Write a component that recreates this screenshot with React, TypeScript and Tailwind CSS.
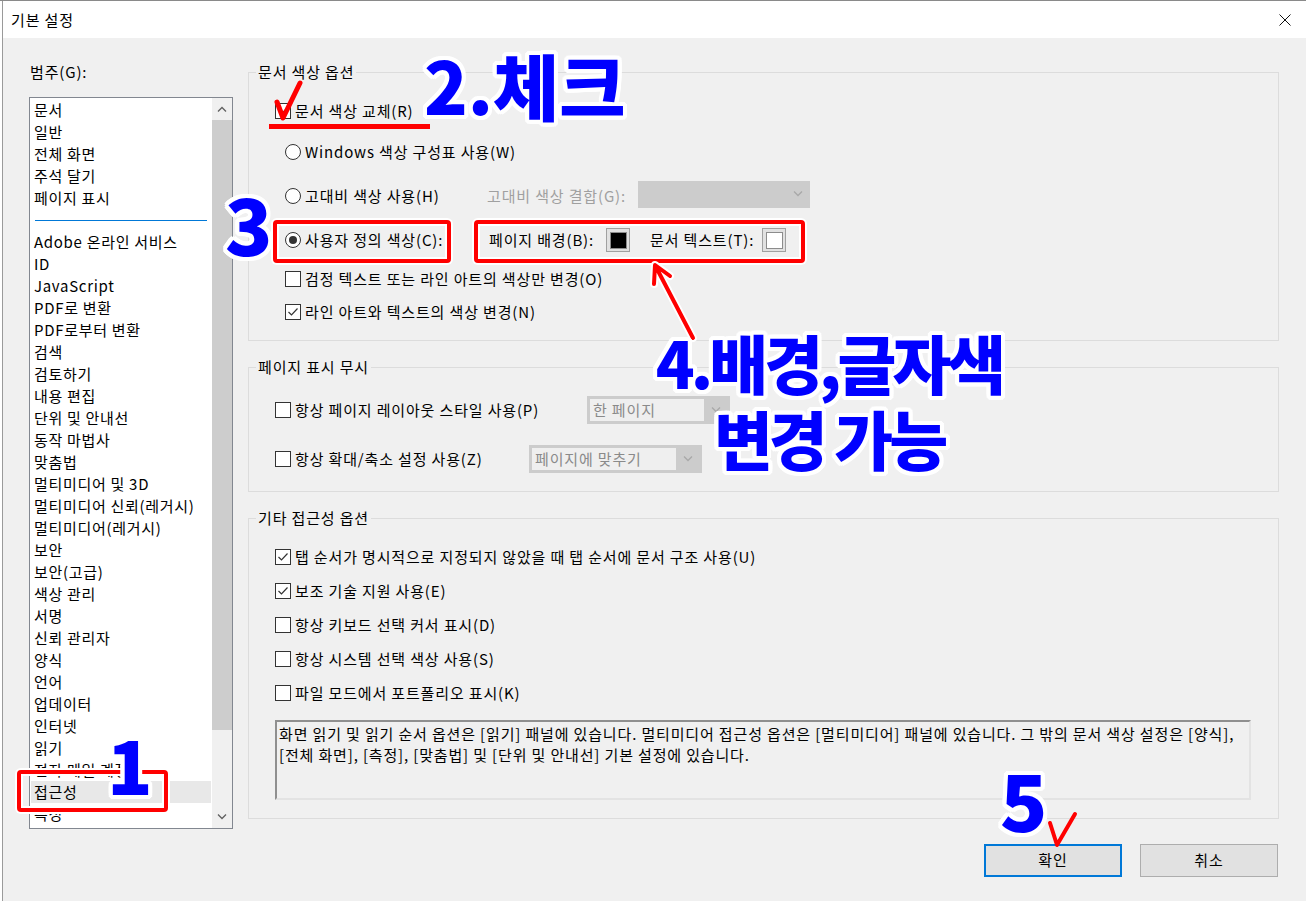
import React from "react";

const top = ["문서", "일반", "전체 화면", "주석 달기", "페이지 표시"];
const rest = [
    "Adobe 온라인 서비스", "ID", "JavaScript", "PDF로 변환", "PDF로부터 변환", "검색", "검토하기",
    "내용 편집", "단위 및 안내선", "동작 마법사", "맞춤법", "멀티미디어 및 3D", "멀티미디어 신뢰(레거시)",
    "멀티미디어(레거시)", "보안", "보안(고급)", "색상 관리", "서명", "신뢰 관리자", "양식", "언어",
    "업데이터", "인터넷", "읽기", "전자 메일 계정", "접근성", "측정",
];

// white outline round the blue annotation numbers
const big =
    "absolute font-black text-[#0000ff] whitespace-nowrap [text-shadow:4px_0_#fff,-4px_0_#fff,0_4px_#fff,0_-4px_#fff,3px_3px_#fff,-3px_-3px_#fff,3px_-3px_#fff,-3px_3px_#fff,2px_4px_#fff,-2px_4px_#fff,4px_2px_#fff,-4px_2px_#fff,2px_-4px_#fff,-2px_-4px_#fff,4px_-2px_#fff,-4px_-2px_#fff]";

function Chevron({ up = false, color = "#606060" }: { up?: boolean; color?: string }) {
    return (
        <svg width="10" height="6" viewBox="0 0 10 6">
            <path d={up ? "M1 5.5 L5 1.5 L9 5.5" : "M1 0.5 L5 4.5 L9 0.5"} fill="none" stroke={color} strokeWidth="1.3" />
        </svg>
    );
}

function Check({ on = false }: { on?: boolean }) {
    return (
        <span className="w-[16px] h-[16px] border border-[#333] bg-white flex items-center justify-center shrink-0">
            {on && (
                <svg width="12" height="12" viewBox="0 0 12 12">
                    <path d="M1.5 6 L4.5 9 L10.5 2.5" fill="none" stroke="#333" strokeWidth="1.2" />
                </svg>
            )}
        </span>
    );
}

function Radio({ on = false }: { on?: boolean }) {
    return (
        <span className="w-[16px] h-[16px] rounded-full border border-[#333] bg-white flex items-center justify-center shrink-0">
            {on && <span className="w-[8px] h-[8px] rounded-full bg-[#333]" />}
        </span>
    );
}

function Swatch({ color }: { color: string }) {
    return (
        <span className="w-[24px] h-[24px] border border-[#a0a0a0] bg-[#e1e1e1] flex items-center justify-center shrink-0">
            <span className={`w-[17px] h-[17px] border border-[#8c8c8c] ${color}`} />
        </span>
    );
}

function Combo({ w, text }: { w: string; text: string }) {
    return (
        <div className={`${w} h-[28px] bg-[#cccccc] p-[3px] flex`}>
            <div className="flex-1 bg-[#efefef] text-[#8a8a8a] px-[3px] leading-[22px] whitespace-nowrap overflow-hidden">{text}</div>
            <div className="w-[23px] flex items-center justify-center">
                <Chevron color="#a8a8a8" />
            </div>
        </div>
    );
}

export default function App() {
    return (
        <div className="w-[1306px] h-[901px] bg-white relative overflow-hidden flex border-t border-[#8a8a8a] font-['Noto_Sans_CJK_KR','Noto_Sans',sans-serif] text-[15px] text-black">
            <div className="w-[2px] shrink-0 bg-white" />
            <div className="flex-1 flex flex-col border-l border-[#9a9a9a] tracking-[0.85px]">
                {/* title bar */}
                <div className="h-[37px] bg-white flex items-center justify-between pl-[8px] pr-[15px]">
                    <span className="leading-[22px]">기본 설정</span>
                    <svg width="12" height="12" viewBox="0 0 12 12">
                        <path d="M0.5 0.5 L11.5 11.5 M11.5 0.5 L0.5 11.5" stroke="#111" strokeWidth="1" />
                    </svg>
                </div>

                <div className="flex-1 bg-[#f0f0f0] flex pl-[26px] pt-[23px]">
                    {/* category list */}
                    <div className="w-[204px] shrink-0 flex flex-col">
                        <div className="h-[22px] leading-[22px] pl-[1px]">범주(G):</div>
                        <div className="mt-[14px] h-[732px] border border-[#828790] bg-white flex">
                            <div className="flex-1 overflow-hidden pt-[1px] tracking-[0.7px]">
                                {top.map((t) => (
                                    <div key={t} className="h-[22px] leading-[22px] pl-[4px] whitespace-nowrap">{t}</div>
                                ))}
                                <div className="h-[22px] flex items-center px-[5px]">
                                    <div className="h-px w-full bg-[#0078d7]" />
                                </div>
                                {rest.map((t) => (
                                    <div
                                        key={t}
                                        className={`h-[22px] leading-[22px] pl-[3px] mx-[1px] whitespace-nowrap ${t === "접근성" ? "bg-[#e8e8e8]" : ""}`}
                                    >
                                        {t}
                                    </div>
                                ))}
                            </div>
                            <div className="w-[20px] bg-[#f0f0f0] flex flex-col">
                                <div className="h-[22px] flex items-center justify-center"><Chevron up /></div>
                                <div className="h-[610px] bg-[#cdcdcd]" />
                                <div className="flex-1" />
                                <div className="h-[23px] flex items-center justify-center"><Chevron /></div>
                            </div>
                        </div>
                    </div>

                    {/* settings */}
                    <div className="ml-[15px] w-[1031px] flex flex-col">
                        <fieldset className="h-[280px] border border-[#dcdcdc]">
                            <legend className="ml-[7px] px-[2px] leading-[22px]">문서 색상 옵션</legend>
                            <div className="flex flex-col">
                                <div className="mt-[17px] h-[22px] flex items-center gap-[4px] pl-[26px]">
                                    <Check on />
                                    <span>문서 색상 교체(R)</span>
                                </div>
                                <div className="mt-[19px] h-[22px] flex items-center gap-[4px] pl-[36px]">
                                    <Radio />
                                    <span>Windows 색상 구성표 사용(W)</span>
                                </div>
                                <div className="mt-[19px] h-[28px] flex items-center pl-[36px]">
                                    <div className="w-[202px] flex items-center gap-[4px]">
                                        <Radio />
                                        <span>고대비 색상 사용(H)</span>
                                    </div>
                                    <span className="w-[151px] text-[#a0a0a0]">고대비 색상 결합(G):</span>
                                    <div className="w-[172px] h-[27px] mb-[4px] bg-[#cccccc] flex items-center justify-end pr-[7px]">
                                        <Chevron color="#a8a8a8" />
                                    </div>
                                </div>
                                <div className="mt-[18px] h-[24px] flex items-center pl-[36px]">
                                    <div className="w-[204px] flex items-center gap-[4px]">
                                        <Radio on />
                                        <span>사용자 정의 색상(C):</span>
                                    </div>
                                    <span className="w-[117px]">페이지 배경(B):</span>
                                    <Swatch color="bg-black" />
                                    <span className="ml-[20px] w-[112px]">문서 텍스트(T):</span>
                                    <Swatch color="bg-white" />
                                </div>
                                <div className="mt-[16px] h-[22px] flex items-center gap-[4px] pl-[36px]">
                                    <Check />
                                    <span>검정 텍스트 또는 라인 아트의 색상만 변경(O)</span>
                                </div>
                                <div className="mt-[11px] h-[22px] flex items-center gap-[4px] pl-[36px]">
                                    <Check on />
                                    <span>라인 아트와 텍스트의 색상 변경(N)</span>
                                </div>
                            </div>
                        </fieldset>

                        <fieldset className="mt-[15px] h-[136px] border border-[#dcdcdc]">
                            <legend className="ml-[7px] px-[2px] leading-[22px]">페이지 표시 무시</legend>
                            <div className="flex flex-col">
                                <div className="mt-[18px] h-[28px] flex items-center pl-[26px]">
                                    <div className="w-[312px] flex items-center gap-[4px]">
                                        <Check />
                                        <span>항상 페이지 레이아웃 스타일 사용(P)</span>
                                    </div>
                                    <Combo w="w-[143px]" text="한 페이지" />
                                </div>
                                <div className="mt-[21px] h-[28px] flex items-center pl-[26px]">
                                    <div className="w-[254px] flex items-center gap-[4px]">
                                        <Check />
                                        <span>항상 확대/축소 설정 사용(Z)</span>
                                    </div>
                                    <Combo w="w-[173px]" text="페이지에 맞추기" />
                                </div>
                            </div>
                        </fieldset>

                        <fieldset className="mt-[15px] h-[312px] border border-[#dcdcdc]">
                            <legend className="ml-[7px] px-[2px] leading-[22px]">기타 접근성 옵션</legend>
                            <div className="flex flex-col gap-[12px] pt-[17px] pl-[26px]">
                                <div className="h-[22px] flex items-center gap-[4px]">
                                    <Check on />
                                    <span>탭 순서가 명시적으로 지정되지 않았을 때 탭 순서에 문서 구조 사용(U)</span>
                                </div>
                                <div className="h-[22px] flex items-center gap-[4px]">
                                    <Check on />
                                    <span>보조 기술 지원 사용(E)</span>
                                </div>
                                <div className="h-[22px] flex items-center gap-[4px]">
                                    <Check />
                                    <span>항상 키보드 선택 커서 표시(D)</span>
                                </div>
                                <div className="h-[22px] flex items-center gap-[4px]">
                                    <Check />
                                    <span>항상 시스템 선택 색상 사용(S)</span>
                                </div>
                                <div className="h-[22px] flex items-center gap-[4px]">
                                    <Check />
                                    <span>파일 모드에서 포트폴리오 표시(K)</span>
                                </div>
                            </div>
                            <div className="mt-[16px] ml-[26px] w-[976px] h-[80px] border-2 border-t-[#8f8f8f] border-l-[#8f8f8f] border-b-[#e3e3e3] border-r-[#e3e3e3] px-[2px] pt-[1px] leading-[21px] whitespace-nowrap overflow-hidden">
                                화면 읽기 및 읽기 순서 옵션은 [읽기] 패널에 있습니다. 멀티미디어 접근성 옵션은 [멀티미디어] 패널에 있습니다. 그 밖의 문서 색상 설정은 [양식],
                                <br />
                                [전체 화면], [측정], [맞춤법] 및 [단위 및 안내선] 기본 설정에 있습니다.
                            </div>
                        </fieldset>

                        <div className="mt-[25px] flex justify-end gap-[18px] pr-[1px]">
                            <button className="w-[138px] h-[33px] bg-[#e1e1e1] border-2 border-[#0078d7]">확인</button>
                            <button className="w-[138px] h-[33px] bg-[#e1e1e1] border border-[#adadad]">취소</button>
                        </div>
                    </div>
                </div>
            </div>

            {/* red annotation marks */}
            <div className="absolute left-[269px] top-[123px] w-[161px] h-[5px] bg-[#ff0000]" />
            <div className="absolute left-[273px] top-[219px] w-[178px] h-[43px] rounded-[4px] border-[4px] border-[#ff0000] shadow-[0_0_0_2px_#fff,inset_0_0_0_2px_#fff]" />
            <div className="absolute left-[474px] top-[219px] w-[331px] h-[43px] rounded-[4px] border-[4px] border-[#ff0000] shadow-[0_0_0_2px_#fff,inset_0_0_0_2px_#fff]" />
            <div className="absolute left-[17px] top-[769px] w-[151px] h-[42px] rounded-[4px] border-[4px] border-[#ff0000] shadow-[0_0_0_2px_#fff,inset_0_0_0_2px_#fff]" />
            <svg className="absolute left-0 top-0 pointer-events-none" width="1306" height="901">
                <path d="M277 101 L283 117 L300 82" fill="none" stroke="#ff0000" strokeWidth="5" strokeLinecap="round" strokeLinejoin="round" />
                <path d="M1050 822 L1057 844 L1075 813" fill="none" stroke="#ff0000" strokeWidth="4" strokeLinecap="round" strokeLinejoin="round" />
                <path d="M693 337 L656 266 M654 283 L655 264 L670 275" fill="none" stroke="#fff" strokeWidth="8" strokeLinecap="round" strokeLinejoin="round" />
                <path d="M693 337 L656 266 M654 283 L655 264 L670 275" fill="none" stroke="#ff0000" strokeWidth="4" strokeLinecap="round" strokeLinejoin="round" />
            </svg>

            {/* blue step numbers */}
            <div className={`${big} leading-none left-[424px] top-[47px] text-[72px]`}>2.체크</div>
            <div className={`${big} leading-none left-[225px] top-[182px] text-[78px]`}>3</div>
            <div className={`${big} leading-none left-[107px] top-[724px] text-[75px]`}>1</div>
            <div className={`${big} leading-none left-[1000px] top-[758px] text-[78px]`}>5</div>
            <div className={`${big} left-[629px] top-[322px] w-[400px] text-center text-[64px] leading-[76px] tracking-[-4px]`}>
                4.배경,글자색
                <br />
                변경 가능
            </div>
        </div>
    );
}
